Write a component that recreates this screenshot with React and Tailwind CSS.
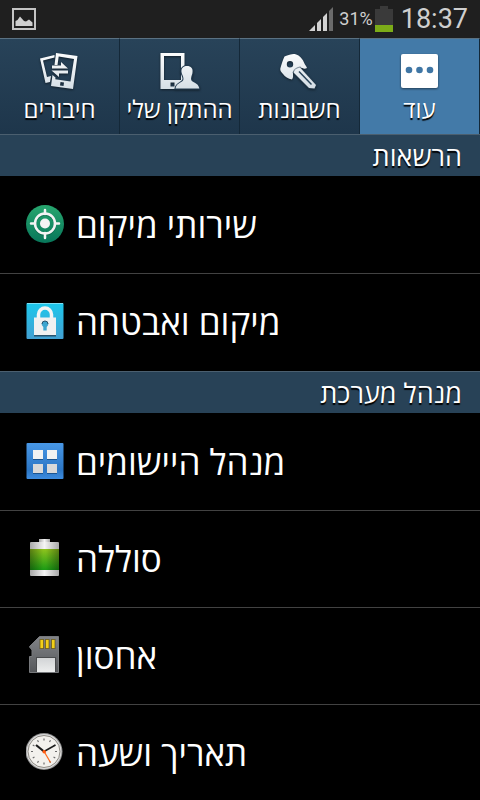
import React, { useState } from 'react';

// ---- Status bar icons ----

const PictureIcon = () => (
  <svg width="24" height="22" viewBox="0 0 24 22" aria-hidden="true">
    <rect x="1" y="1" width="22" height="20" fill="#1f1f1f" stroke="#c4c4c4" strokeWidth="2" />
    <path d="M3.500 18V13L5.500 12L8 8.500L12 13L14 13.500L17 11.500L20.500 14.500V18Z" fill="#cfcfcf" />
  </svg>
);

const SignalIcon = () => (
  <svg width="24" height="24" viewBox="0 0 24 24" aria-hidden="true">
    <path d="M0 24L6 18V24Z" fill="#d2d2d2" />
    <path d="M8 16L12 12V24H8Z" fill="#d2d2d2" />
    <path d="M14 10L18 6V24H14Z" fill="#d2d2d2" />
    <path d="M20 4L24 0V24H20Z" fill="#6b6b6b" />
  </svg>
);

const StatusBatteryIcon = () => (
  <svg width="18" height="26" viewBox="0 0 18 26" aria-hidden="true">
    <path d="M5 0H13V3H18V26H0V3H5Z" fill="#3a3a3a" />
    <rect y="19" width="18" height="7" fill="#7cac18" />
  </svg>
);

// ---- Tab icons ----

const ConnectionsIcon = () => (
  <svg width="40" height="40" viewBox="0 0 40 40" className="drop-shadow-[0_1px_1px_rgba(0,0,0,0.5)]" aria-hidden="true">
    <defs>
      <linearGradient id="connFill" x1="0" y1="0" x2="0" y2="40" gradientUnits="userSpaceOnUse">
        <stop offset="0" stopColor="#ffffff" />
        <stop offset="1" stopColor="#d3dde4" />
      </linearGradient>
    </defs>
    <path fill="url(#connFill)" d="M0 7.500L14.500 4V6.500L3 9.500L7 26L11 25L10 31L5.500 32Z" />
    <path
      fillRule="evenodd"
      fill="url(#connFill)"
      d="M16 2L37.500 5L33 38L11 35L12.500 24L15.500 26.500L15.300 28.300L30.500 30.500L34 8L18.700 5.500L17.500 14H14.500Z M20.500 31L20 34.500L23.500 35L24 31.500Z"
    />
    <path fill="url(#connFill)" d="M12 14.500H21V11L28 17.500H12Z M28 19.500V22.500H19V26L11.500 19.500Z" />
  </svg>
);

const DeviceIcon = () => (
  <svg width="40" height="40" viewBox="0 0 40 40" className="drop-shadow-[0_1px_1px_rgba(0,0,0,0.5)]" aria-hidden="true">
    <defs>
      <linearGradient id="devFill" x1="0" y1="0" x2="0" y2="40" gradientUnits="userSpaceOnUse">
        <stop offset="0" stopColor="#ffffff" />
        <stop offset="1" stopColor="#d3dde4" />
      </linearGradient>
    </defs>
    <path fillRule="evenodd" fill="url(#devFill)" d="M0.500 2H24.500V38H0.500Z M4 5V29H21V5Z M10.500 31.500V35.500H14.500V31.500Z" />
    <path
      fill="url(#devFill)"
      stroke="#223b50"
      strokeWidth="2"
      paintOrder="stroke"
      d="M27 15C31 15 33 17.500 32.500 21C32.500 23.500 31 25 31 28C31 32 38.500 31 39.300 37.500H15.500C16.500 31 23.500 32 23.500 28C23.500 25 21.700 23.500 21.500 21C21.200 17.500 23 15 27 15Z"
    />
  </svg>
);

const KeyIcon = () => (
  <svg width="40" height="40" viewBox="0 0 40 40" className="drop-shadow-[0_1px_1px_rgba(0,0,0,0.5)]" aria-hidden="true">
    <defs>
      <linearGradient id="keyFill" x1="0" y1="0" x2="0" y2="40" gradientUnits="userSpaceOnUse">
        <stop offset="0" stopColor="#ffffff" />
        <stop offset="1" stopColor="#cfd9e1" />
      </linearGradient>
    </defs>
    <path
      fillRule="evenodd"
      fill="url(#keyFill)"
      d="M10.500 3.500C13 2.500 16.500 3 18.500 4.500C21 6 23 9 24 11.500C25 14 26.500 15 27 17C25.500 18 23 18 20 16.500L13 21V22.500C13 25 13.500 26.500 12 28.500C8 27.500 5 26 3 23C1 21 0 19.500 0.300 17.500C1.500 13 3 8.500 4.500 5.500C6 4.500 8 4.500 10.500 3.500Z M10 10A3.200 3.200 0 1 0 10 16.400A3.200 3.200 0 1 0 10 10Z"
    />
    <path
      fill="url(#keyFill)"
      stroke="#25405480"
      strokeWidth="2"
      paintOrder="stroke"
      d="M20 16.500L36 34L34.500 37.500L29 37L13.500 21.500Q15 17.500 20 16.500Z"
    />
    <path d="M19 20.500L31.500 33.500" stroke="#2a4459" strokeWidth="1.500" />
  </svg>
);

const MoreIcon = () => (
  <svg width="40" height="40" viewBox="0 0 40 40" className="drop-shadow-[0_1px_1px_rgba(0,0,0,0.5)]" aria-hidden="true">
    <rect x="1" y="3" width="37" height="34" rx="2" fill="#ffffff" />
    <circle cx="9" cy="19" r="3.300" fill="#3f76a5" />
    <circle cx="19.500" cy="19" r="3.300" fill="#3f76a5" />
    <circle cx="30" cy="19" r="3.300" fill="#3f76a5" />
  </svg>
);

// ---- List icons ----

const LocationIcon = () => (
  <svg width="38" height="38" viewBox="0 0 38 38" aria-hidden="true">
    <defs>
      <linearGradient id="locFill" x1="0" y1="0" x2="0" y2="1">
        <stop offset="0" stopColor="#27a66e" />
        <stop offset="1" stopColor="#08765a" />
      </linearGradient>
    </defs>
    <circle cx="19" cy="19" r="19" fill="url(#locFill)" />
    <circle cx="19" cy="19.500" r="10" fill="none" stroke="#07573f" strokeOpacity="0.6" strokeWidth="2.500" />
    <circle cx="19" cy="18.500" r="10" fill="none" stroke="#f3f3f3" strokeWidth="2.500" />
    <path d="M19 5V9M19 28V33M5 18.500H9M29 18.500H33" stroke="#f3f3f3" strokeWidth="2.500" strokeLinecap="round" />
    <circle cx="19" cy="18.500" r="5" fill="#f3f3f3" />
  </svg>
);

const LockIcon = () => (
  <svg width="38" height="38" viewBox="0 0 38 38" aria-hidden="true">
    <defs>
      <linearGradient id="lockFill" x1="0" y1="0" x2="0" y2="1">
        <stop offset="0" stopColor="#1cc8ec" />
        <stop offset="1" stopColor="#43a0d2" />
      </linearGradient>
    </defs>
    <rect x="0.500" y="1" width="37" height="36" rx="1" fill="url(#lockFill)" />
    <rect x="1" y="1" width="36" height="1" fill="#7fe0f5" />
    <rect x="8" y="33" width="22" height="1.500" fill="#28536e" />
    <path d="M12.500 17V12.500A6.500 6.500 0 0 1 25.500 12.500V17" fill="none" stroke="#f4f4f4" strokeWidth="3.500" />
    <rect x="8" y="15.500" width="22" height="17.500" fill="#f1f1f1" />
    <path d="M19 19A3.200 3.200 0 0 0 17.300 25L17.300 28.500H20.700V25A3.200 3.200 0 0 0 19 19Z" fill="#3da5cf" />
    <path d="M16 22A3 3 0 0 1 22 22" fill="none" stroke="#28536e" />
  </svg>
);

const AppsIcon = () => (
  <svg width="38" height="38" viewBox="0 0 38 38" aria-hidden="true">
    <defs>
      <linearGradient id="appsFill" x1="0" y1="0" x2="0" y2="1">
        <stop offset="0" stopColor="#4897e6" />
        <stop offset="0.750" stopColor="#2c76c5" />
        <stop offset="1" stopColor="#3d8cdf" />
      </linearGradient>
    </defs>
    <rect x="0.500" y="1" width="37" height="36" rx="1" fill="url(#appsFill)" />
    <g fill="#1d5590">
      <rect x="7" y="9" width="10" height="9" />
      <rect x="21" y="9" width="10" height="9" />
      <rect x="7" y="23" width="10" height="9" />
      <rect x="21" y="23" width="10" height="9" />
    </g>
    <rect x="7" y="8" width="10" height="9" fill="#f2f2f2" />
    <rect x="21" y="8" width="10" height="9" fill="#f2f2f2" />
    <rect x="7" y="22" width="10" height="9" fill="#d9d9d9" />
    <rect x="21" y="22" width="10" height="9" fill="#d9d9d9" />
  </svg>
);

const BatteryIcon = () => (
  <svg width="38" height="38" viewBox="0 0 38 38" aria-hidden="true">
    <defs>
      <linearGradient id="capFill" x1="0" y1="0" x2="1" y2="0">
        <stop offset="0" stopColor="#a8a8a8" />
        <stop offset="0.500" stopColor="#f5f5f5" />
        <stop offset="1" stopColor="#a8a8a8" />
      </linearGradient>
      <linearGradient id="chargeFill" x1="0" y1="0" x2="0" y2="1">
        <stop offset="0" stopColor="#8fc31d" />
        <stop offset="1" stopColor="#1a9a14" />
      </linearGradient>
      <linearGradient id="chargeShade" x1="0" y1="0" x2="1" y2="0">
        <stop offset="0" stopColor="#000000" stopOpacity="0.350" />
        <stop offset="0.450" stopColor="#000000" stopOpacity="0" />
        <stop offset="0.550" stopColor="#000000" stopOpacity="0" />
        <stop offset="1" stopColor="#000000" stopOpacity="0.350" />
      </linearGradient>
    </defs>
    <rect x="13" y="0" width="11" height="4" fill="url(#capFill)" />
    <rect x="4" y="3" width="29" height="34" rx="1" fill="url(#capFill)" />
    <rect x="4" y="10" width="29" height="21" fill="url(#chargeFill)" />
    <rect x="4" y="10" width="29" height="21" fill="url(#chargeShade)" />
  </svg>
);

const StorageIcon = () => (
  <svg width="38" height="38" viewBox="0 0 38 38" aria-hidden="true">
    <defs>
      <linearGradient id="cardFill" x1="0" y1="0" x2="0" y2="1">
        <stop offset="0" stopColor="#828488" />
        <stop offset="1" stopColor="#55575a" />
      </linearGradient>
      <linearGradient id="labelFill" x1="0" y1="0" x2="0" y2="1">
        <stop offset="0" stopColor="#d2d4d6" />
        <stop offset="1" stopColor="#eceded" />
      </linearGradient>
    </defs>
    <path d="M13.500 0.500H32.500V36.500H3.500V20.500H6V14L3.500 11V10.500Z" fill="url(#cardFill)" stroke="#77797c" />
    <rect x="10" y="21" width="20" height="15" fill="#4a4c4e" />
    <rect x="11" y="22" width="18" height="14" fill="url(#labelFill)" />
    <g fill="#f2cf18" stroke="#54420c" strokeOpacity="0.6">
      <rect x="14" y="3.500" width="3.500" height="9" />
      <rect x="19.500" y="3.500" width="3.500" height="9" />
      <rect x="25.500" y="3.500" width="3.500" height="9" />
    </g>
  </svg>
);

const ClockIcon = () => (
  <svg width="38" height="38" viewBox="0 0 38 38" aria-hidden="true">
    <circle cx="18" cy="18.500" r="18.500" fill="#8d8d8d" />
    <circle cx="18" cy="18.500" r="17.500" fill="#dadada" />
    <circle cx="18" cy="18.500" r="16" fill="#f3f1ed" stroke="#77736c" strokeWidth="0.800" />
    <g stroke="#6b6b6b" strokeWidth="1.200">
      {[0, 30, 60, 90, 120, 150, 180, 210, 240, 270, 300, 330].map((deg) => (
        <path key={deg} d="M18 5.500V7.500" transform={`rotate(${deg} 18 18.5)`} />
      ))}
    </g>
    <path d="M10 12L18 18.500" stroke="#1c1c1c" strokeWidth="2.200" />
    <path d="M18 18.500L29.500 12" stroke="#1c1c1c" strokeWidth="1.500" />
    <path d="M17.500 17.500L24.500 29.500" stroke="#ff6a1c" strokeWidth="1.200" />
    <circle cx="18.200" cy="18.800" r="1.800" fill="#ff5a10" />
  </svg>
);

const tabs = [
  { id: 'connections', label: 'חיבורים', Icon: ConnectionsIcon },
  { id: 'device', label: 'ההתקן שלי', Icon: DeviceIcon },
  { id: 'accounts', label: 'חשבונות', Icon: KeyIcon },
  { id: 'more', label: 'עוד', Icon: MoreIcon },
];

const sections = [
  {
    title: 'הרשאות',
    items: [
      { label: 'שירותי מיקום', Icon: LocationIcon },
      { label: 'מיקום ואבטחה', Icon: LockIcon },
    ],
  },
  {
    title: 'מנהל מערכת',
    items: [
      { label: 'מנהל היישומים', Icon: AppsIcon },
      { label: 'סוללה', Icon: BatteryIcon },
      { label: 'אחסון', Icon: StorageIcon },
      { label: 'תאריך ושעה', Icon: ClockIcon },
    ],
  },
];

const App = () => {
  const [activeTab, setActiveTab] = useState('more');

  return (
    <div lang="he" className="flex h-screen flex-col bg-black font-['Open_Sans','Noto_Sans',sans-serif] text-white">
      <header className="flex h-[38px] shrink-0 items-center justify-between bg-[#1f1f1f] px-3 font-[Roboto,sans-serif] text-[#cfcfcf]">
        <PictureIcon />
        <div className="flex items-center">
          <SignalIcon />
          <span className="mr-0.5 ml-1.5 text-lg leading-6">31%</span>
          <StatusBatteryIcon />
          <span className="ml-2 text-[27px] leading-8">18:37</span>
        </div>
      </header>

      {/* Tabs */}
      <nav className="grid h-24 shrink-0 grid-cols-4" role="tablist">
        {tabs.map(({ id, label, Icon }) => (
          <button
            key={id}
            type="button"
            role="tab"
            aria-selected={activeTab === id}
            onClick={() => setActiveTab(id)}
            className={`flex flex-col items-center border-t border-r border-t-[#5a7182] border-r-[#142838] pt-3 ${
              activeTab === id ? 'bg-[#437aa8]' : 'bg-linear-to-b from-[#284359] to-[#1e364b]'
            }`}
          >
            <Icon />
            <span dir="rtl" className="text-2xl leading-9 whitespace-nowrap [text-shadow:0_2px_1px_#000]">
              {label}
            </span>
          </button>
        ))}
      </nav>

      {/* Settings list */}
      <main className="min-h-0 flex-1 overflow-y-auto [scrollbar-width:none]">
        {sections.map((section) => (
          <section key={section.title}>
            <h2
              dir="rtl"
              className="h-[42px] border-t border-[#4b5f6f] bg-[#284257] px-[18px] text-[27px] leading-[42px] [text-shadow:0_2px_1px_#000]"
            >
              {section.title}
            </h2>
            <ul className="pt-px">
              {section.items.map(({ label, Icon }, index) => (
                <li
                  key={label}
                  className={`border-b ${index < section.items.length - 1 ? 'border-[#424242]' : 'border-transparent'}`}
                >
                  <button type="button" className="flex h-24 w-full items-center gap-3 pb-0.5 pl-[26px] text-left">
                    <Icon />
                    <span dir="rtl" className="pt-0.5 text-[35px] leading-12">
                      {label}
                    </span>
                  </button>
                </li>
              ))}
            </ul>
          </section>
        ))}
      </main>
    </div>
  );
};

export default App;
